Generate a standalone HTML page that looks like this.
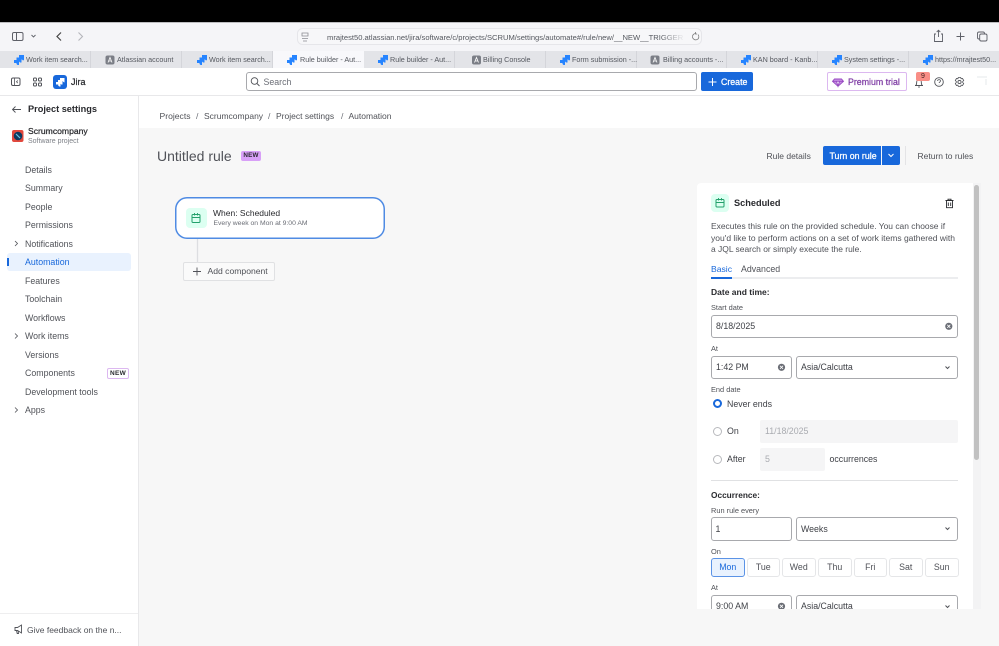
<!DOCTYPE html>
<html><head><meta charset="utf-8"><title>Rule builder</title>
<style>
*{box-sizing:border-box}
html,body{margin:0;padding:0;width:999px;height:646px;overflow:hidden;background:#f7f7f7;font-family:"Liberation Sans",sans-serif;color:#505258}
#w{position:absolute;left:0;top:0;width:999px;height:646px;overflow:hidden;filter:blur(.3px)}
.a{position:absolute}
.t{position:absolute;white-space:nowrap;line-height:1}
svg{position:absolute;overflow:visible}
.tab{position:absolute;top:51px;height:17px;background:#e3e4e8;border-right:1px solid #d4d5da}
.tab span{position:absolute;top:5px;font-size:7.2px;color:#55585f;white-space:nowrap;line-height:1}
.nav{position:absolute;left:25px;font-size:8.8px;color:#505258;white-space:nowrap;line-height:1}
.inp{position:absolute;background:#fff;border:1px solid #a8a9ad;border-radius:3px}
.lab{position:absolute;left:711px;font-size:7.4px;color:#505258;white-space:nowrap;line-height:1}
.val{position:absolute;font-size:8.8px;color:#3f4147;white-space:nowrap;line-height:1}
.day{position:absolute;top:558px;height:19px;width:33.5px;background:#fff;border:1px solid #e5e6e8;border-radius:3px;font-size:8.8px;color:#505258;text-align:center;line-height:17px}
.sb{-webkit-text-stroke:.25px currentColor}
</style></head><body><div id="w">

<!-- browser chrome -->
<div class="a" style="left:0;top:0;width:999px;height:22px;background:#000"></div>
<div class="a" style="left:0;top:22px;width:999px;height:29px;background:#f5f5f8;border-top:1px solid #bdbdc0"></div>
<svg style="left:0;top:0" width="999" height="51" fill="none" stroke="#5e6068" stroke-width="1">
<rect x="12.500" y="32.500" width="10.500" height="8" rx="1.500"/><path d="M16.500 32.500v8"/>
<path d="M31.500 35l2 2 2-2" stroke-width=".9"/>
<path d="M61 32.500l-4 4 4 4" stroke-width="1.200" stroke="#444"/>
<path d="M78.500 32.500l4 4-4 4" stroke-width="1.100" stroke="#b5b6bb"/>
<rect x="297.500" y="28.500" width="404" height="16" rx="5" fill="#f7f7f9" stroke="#e6e6ea"/>
<path d="M302 33h6v3h-6zM302 38.500h6M303 41h4" stroke="#8a8c92" stroke-width=".8"/>
<path d="M698 34.500a3.200 3.200 0 1 1-2.600-1M695.500 32v2h1.600" stroke="#777" stroke-width=".8"/>
<path d="M936 34h-1.500v7.500h8V34H941M938.500 37v-6.500M936.700 32l1.800-1.800 1.800 1.800" stroke-width=".9"/>
<path d="M960.500 32.500v8M956.500 36.500h8" stroke-width="1"/>
<rect x="977.500" y="32" width="7" height="7" rx="1.500" stroke-width=".9"/><rect x="979.700" y="34" width="7.300" height="7" rx="1.500" fill="#f5f5f8" stroke-width=".9"/>
</svg>
<div class="t" style="left:327px;top:31.500px;font-size:7.600px;line-height:11px;height:11px;color:#55585f;width:358px;overflow:hidden;-webkit-mask-image:linear-gradient(90deg,#000 93%,transparent)">mrajtest50.atlassian.net/jira/software/c/projects/SCRUM/settings/automate#/rule/new/__NEW__TRIGGER</div>

<!-- tabs -->
<div class="tab" style="left:0;width:91px"><span style="left:26px">Work item search...</span></div>
<div class="tab" style="left:91px;width:91px"><span style="left:26px">Atlassian account</span></div>
<div class="tab" style="left:182px;width:91px"><span style="left:27px">Work item search...</span></div>
<div class="tab" style="left:273px;width:91px;background:#f8f8fb;border:0"><span style="left:27px">Rule builder - Aut...</span></div>
<div class="tab" style="left:364px;width:91px"><span style="left:26px">Rule builder - Aut...</span></div>
<div class="tab" style="left:455px;width:91px"><span style="left:28px">Billing Console</span></div>
<div class="tab" style="left:546px;width:91px"><span style="left:26px">Form submission -...</span></div>
<div class="tab" style="left:637px;width:90px"><span style="left:26px">Billing accounts -...</span></div>
<div class="tab" style="left:727px;width:91px"><span style="left:26px">KAN board - Kanb...</span></div>
<div class="tab" style="left:818px;width:91px"><span style="left:26px">System settings -...</span></div>
<div class="tab" style="left:909px;width:90px;border:0"><span style="left:26px">https://mrajtest50...</span></div>
<svg style="left:0;top:0" width="999" height="70">
<defs><g id="jm" fill="#2684ff"><path d="M5 0h5v5L9 5.500 8 4.500H5z"/><path d="M2.500 2.500h5v5h-1.500L5 6.500V5.500H2.500z"/><path d="M0 5h5v5H3.500L2.500 9V8H0z"/></g>
<g id="am"><rect width="9" height="9" rx="2" fill="#7b7e86"/><path d="M2.500 7L4.500 2l2 5M3.300 5.500h2.400" stroke="#fff" stroke-width=".8" fill="none"/></g></defs>
<use href="#jm" x="14" y="55"/><use href="#am" x="105.500" y="55.500"/><use href="#jm" x="197" y="55"/><use href="#jm" x="287" y="55"/><use href="#jm" x="378" y="55"/><use href="#am" x="472" y="55.500"/><use href="#jm" x="560" y="55"/><use href="#am" x="650.500" y="55.500"/><use href="#jm" x="741" y="55"/><use href="#jm" x="832" y="55"/><use href="#jm" x="923" y="55"/>
</svg>

<!-- jira nav -->
<div class="a" style="left:0;top:68px;width:999px;height:28px;background:#fff;border-bottom:1px solid #e8e8ea"></div>
<div class="a" style="left:246px;top:72px;width:451px;height:19px;background:#fff;border:1px solid #a8a9ad;border-radius:3px"></div>
<svg style="left:0;top:0" width="999" height="100" fill="none" stroke="#505258">
<rect x="11.500" y="78" width="8.500" height="7.500" rx="1.500"/><path d="M14.500 78v7.500M17.800 80.500l-1.300 1.300 1.300 1.300" stroke-width=".8"/>
<rect x="33.500" y="78" width="3" height="3" rx="1"/><rect x="38.500" y="78" width="3" height="3" rx="1"/><rect x="33.500" y="83" width="3" height="3" rx="1"/><rect x="38.500" y="83" width="3" height="3" rx="1"/>
<rect x="53" y="75" width="14" height="14" rx="3" fill="#1868db" stroke="none"/>
<g fill="#fff" stroke="none"><path d="M60 78h4.500v4.500L63.500 82l-1-1H60z"/><path d="M58 80h4.500v4.500h-1.300l-1-1V82.500H58z"/><path d="M56 82h4.500v4.500h-1.300l-1-1v-1H56z"/></g>
<circle cx="254.500" cy="81" r="3.300" stroke-width=".9"/><path d="M257 83.500l2.500 2.500" stroke-width=".9"/>
</svg>
<div class="t sb" style="left:71px;top:77.500px;font-size:9px;color:#292a2e">Jira</div>
<div class="t" style="left:263.500px;top:77.500px;font-size:8.800px;color:#6b6e76">Search</div>
<div class="a" style="left:701px;top:72px;width:52px;height:19px;background:#1868db;border-radius:2px"></div>
<svg style="left:0;top:0" width="999" height="100" fill="none">
<path d="M712.500 78v8M708.500 82h8" stroke="#fff" stroke-width="1"/>
</svg>
<div class="t sb" style="left:721px;top:77.500px;font-size:8.800px;color:#fff">Create</div>
<div class="a" style="left:827px;top:72px;width:80px;height:19px;background:#fff;border:1px solid #dcb8f0;border-radius:2px"></div>
<svg style="left:0;top:0" width="999" height="100" fill="none">
<path d="M834.500 79h7l2 2.300-5.500 5-5.500-5zM832.500 81.300h11M836.500 81.300l1.500 5 1.500-5" stroke="#964ac0" stroke-width=".9" fill="#c98fe4"/>
<path d="M915 85.500h8M915.800 85.500c.9-1 .9-2 .9-3.500a2.300 2.300 0 0 1 4.600 0c0 1.500 0 2.500.9 3.500M918.200 87h1.600" stroke="#505258" stroke-width=".9"/>
<circle cx="939" cy="82" r="4.300" stroke="#505258" stroke-width=".9"/><path d="M937.600 81c0-1.800 2.900-1.800 2.900 0 0 1-1.400 1-1.400 2M939 84.500v.3" stroke="#505258" stroke-width=".8"/>
<circle cx="959.500" cy="82" r="1.600" stroke="#505258" stroke-width=".9"/><path d="M958.300 77.500h2.400l.4 1.300 1.400-.3 1.200 2-1 1 0 1 1 1-1.200 2-1.400-.4-.4 1.300h-2.400l-.4-1.300-1.400.4-1.200-2 1-1 0-1-1-1 1.200-2 1.400.3z" stroke="#505258" stroke-width=".8"/>
<path d="M977 77h10M986 79v6" stroke="#eef0f2" stroke-width="1.500"/>
</svg>
<div class="t sb" style="left:848px;top:77.500px;font-size:8.800px;color:#803fa5">Premium trial</div>
<div class="a" style="left:916px;top:72px;width:14px;height:9px;background:#f98e86;border-radius:2px;font-size:7px;color:#42221f;text-align:center;line-height:9px">9</div>

<!-- sidebar -->
<div class="a" style="left:0;top:96px;width:139px;height:550px;background:#fff;border-right:1px solid #e8e8ea"></div>
<svg style="left:0;top:0" width="140" height="646" fill="none" stroke="#505258">
<path d="M21 109.500h-8.500M15.500 106.500l-3 3 3 3" stroke-width=".9"/>
<rect x="12" y="130" width="11.500" height="12" rx="2" fill="#e2483d" stroke="none"/>
<circle cx="18" cy="136" r="4.300" fill="#0c3a61" stroke="none"/><path d="M16 134l4 4" stroke="#6cc3e0" stroke-width="1.200"/>
<path d="M15 241l2.500 2.500-2.500 2.500M15 333.500l2.500 2.500-2.500 2.500M15 407.500l2.500 2.500-2.500 2.500" stroke-width=".8"/>
</svg>
<div class="t" style="left:28px;top:104.500px;font-size:9.200px;font-weight:bold;color:#292a2e">Project settings</div>
<div class="t sb" style="left:28px;top:127px;font-size:8.600px;color:#292a2e">Scrumcompany</div>
<div class="t" style="left:28px;top:138px;font-size:7px;color:#7d8087">Software project</div>
<div class="a" style="left:7px;top:253px;width:124px;height:18px;background:#e9f2fe;border-radius:3px"></div>
<div class="a" style="left:7px;top:258px;width:1.500px;height:8px;background:#1868db"></div>
<div class="nav" style="top:165.500px">Details</div>
<div class="nav" style="top:184px">Summary</div>
<div class="nav" style="top:202.500px">People</div>
<div class="nav" style="top:221px">Permissions</div>
<div class="nav" style="top:239.500px">Notifications</div>
<div class="nav" style="top:258px;color:#1868db">Automation</div>
<div class="nav" style="top:276.500px">Features</div>
<div class="nav" style="top:295px">Toolchain</div>
<div class="nav" style="top:313.500px">Workflows</div>
<div class="nav" style="top:332px">Work items</div>
<div class="nav" style="top:350.500px">Versions</div>
<div class="nav" style="top:369px">Components</div>
<div class="nav" style="top:387.500px">Development tools</div>
<div class="nav" style="top:406px">Apps</div>
<div class="a" style="left:107px;top:368px;width:22px;height:11px;background:#fff;border:1px solid #dcb8f0;border-radius:2px;font-size:6.500px;font-weight:bold;color:#292a2e;text-align:center;line-height:9px;letter-spacing:.3px">NEW</div>
<div class="a" style="left:0;top:613px;width:138px;height:1px;background:#eeeeef"></div>
<svg style="left:0;top:0" width="30" height="646" fill="none" stroke="#505258"><path d="M15 627.500h2.500l4-2.500v8l-4-2.500H15zM16.500 630.500l.7 3h1.300l-.5-3" stroke-width=".9"/></svg>
<div class="t" style="left:27px;top:625.500px;font-size:8.500px;color:#505258">Give feedback on the n...</div>

<!-- content -->
<div class="a" style="left:139px;top:96px;width:860px;height:32px;background:#fff"></div>
<div class="t" style="left:159.500px;top:112px;font-size:8.600px;color:#505258">Projects</div>
<div class="t" style="left:196px;top:112px;font-size:8.600px;color:#6b6e76">/</div>
<div class="t" style="left:204px;top:112px;font-size:8.500px;color:#505258">Scrumcompany</div>
<div class="t" style="left:268px;top:112px;font-size:8.600px;color:#6b6e76">/</div>
<div class="t" style="left:276px;top:112px;font-size:8.500px;color:#505258">Project settings</div>
<div class="t" style="left:341px;top:112px;font-size:8.600px;color:#6b6e76">/</div>
<div class="t" style="left:348.500px;top:112px;font-size:8.500px;color:#505258">Automation</div>

<div class="t" style="left:157px;top:149px;font-size:14px;color:#505258">Untitled rule</div>
<div class="a" style="left:241px;top:151px;width:20px;height:10px;background:#d8a0f7;border-radius:2px;font-size:6.300px;font-weight:bold;color:#292a2e;text-align:center;line-height:10px;letter-spacing:.2px">NEW</div>

<div class="t" style="left:766.500px;top:151.500px;font-size:8.500px;color:#505258">Rule details</div>
<div class="a" style="left:823px;top:146px;width:58px;height:19px;background:#1868db;border-radius:2px 0 0 2px"></div>
<div class="a" style="left:882px;top:146px;width:18px;height:19px;background:#1868db;border-radius:0 2px 2px 0"></div>
<div class="t sb" style="left:829.500px;top:151.500px;font-size:8.800px;color:#fff">Turn on rule</div>
<svg style="left:0;top:0" width="999" height="170" fill="none"><path d="M888.500 154l2.500 2.500 2.500-2.500" stroke="#fff" stroke-width="1"/></svg>
<div class="a" style="left:904.500px;top:146px;width:1.500px;height:19px;background:#e4e4e6"></div>
<div class="t" style="left:917.500px;top:151.500px;font-size:8.500px;color:#505258">Return to rules</div>

<!-- canvas card -->
<div class="a" style="left:175px;top:197px;width:209.500px;height:42px;background:#fff;box-shadow:inset 0 0 0 1.500px #4f8be3;border-radius:12px"></div>
<div class="a" style="left:185.500px;top:208px;width:21px;height:20px;background:#dcfff1;border-radius:4px"></div>
<svg style="left:0;top:0" width="400" height="300" fill="none">
<rect x="192" y="214.500" width="8" height="8" rx="1" stroke="#22a06b"/><path d="M192 217.500h8M194.500 213v2.500M197.500 213v2.500" stroke="#22a06b" stroke-width=".9"/>
<path d="M197.500 239v23" stroke="#dddee1" stroke-width="1.300"/>
</svg>
<div class="t" style="left:213px;top:209px;font-size:8.500px;color:#292a2e">When: Scheduled</div>
<div class="t" style="left:213.500px;top:221px;font-size:6.800px;color:#6b6e76">Every week on Mon at 9:00 AM</div>
<div class="a" style="left:183px;top:262px;width:92px;height:18.500px;background:#fafafa;border:1px solid #e0e1e3;border-radius:2px"></div>
<div class="t" style="left:207.500px;top:267px;font-size:8.600px;color:#505258">Add component</div>
<svg style="left:0;top:0" width="400" height="300" fill="none"><path d="M197 267.500v8M193 271.500h8" stroke="#505258" stroke-width=".9"/></svg>

<!-- panel -->
<div class="a" style="left:697px;top:183px;width:283px;height:426px;background:#fff;border-radius:4px 4px 0 0;overflow:hidden"></div>
<div class="a" style="left:972.500px;top:183px;width:8px;height:426px;background:#f3f3f4"></div>
<div class="a" style="left:974px;top:185px;width:5px;height:275px;background:#c1c1c1;border-radius:3px"></div>
<div class="a" style="left:711px;top:194px;width:18px;height:18px;background:#dcfff1;border-radius:4px"></div>
<svg style="left:0;top:0" width="999" height="300" fill="none">
<rect x="716" y="199.500" width="8" height="7.500" rx="1" stroke="#22a06b"/><path d="M716 202.500h8M718.500 198v2.500M721.500 198v2.500" stroke="#22a06b" stroke-width=".9"/>
<path d="M945.500 200.500h8M948 200.500v-1.300h3v1.300M946.500 200.500v7.200h6v-7.200M948.300 202.500v3.500M950.700 202.500v3.500" stroke="#292a2e" stroke-width=".9"/>
</svg>
<div class="t" style="left:734px;top:198.500px;font-size:9.200px;font-weight:bold;color:#292a2e">Scheduled</div>
<div class="t" style="left:711px;top:222px;font-size:8.450px;color:#505258">Executes this rule on the provided schedule. You can choose if</div>
<div class="t" style="left:711px;top:233.500px;font-size:8.500px;color:#505258">you'd like to perform actions on a set of work items gathered with</div>
<div class="t" style="left:711px;top:245px;font-size:8.450px;color:#505258">a JQL search or simply execute the rule.</div>
<div class="t" style="left:711px;top:265px;font-size:8.600px;color:#1868db">Basic</div>
<div class="t" style="left:741px;top:265px;font-size:8.800px;color:#505258">Advanced</div>
<div class="a" style="left:711px;top:277px;width:247px;height:1.500px;background:#ecedef"></div>
<div class="a" style="left:711px;top:277px;width:20.500px;height:1.500px;background:#1868db"></div>
<div class="t" style="left:711px;top:288px;font-size:8.500px;font-weight:bold;color:#292a2e">Date and time:</div>

<div class="lab" style="top:304px">Start date</div>
<div class="inp" style="left:711px;top:315px;width:247px;height:23px"></div>
<div class="val" style="left:716px;top:322px">8/18/2025</div>

<div class="lab" style="top:345px">At</div>
<div class="inp" style="left:711px;top:356px;width:81px;height:23px"></div>
<div class="val" style="left:716px;top:363px">1:42 PM</div>
<div class="inp" style="left:796px;top:356px;width:162px;height:23px"></div>
<div class="val" style="left:801px;top:363px">Asia/Calcutta</div>

<div class="lab" style="top:386px">End date</div>
<div class="a" style="left:713px;top:399px;width:9px;height:9px;border-radius:50%;border:2.500px solid #1868db;background:#fff"></div>
<div class="val" style="left:727px;top:399.500px">Never ends</div>
<div class="a" style="left:713px;top:427px;width:9px;height:9px;border-radius:50%;border:1px solid #b8b9bd;background:#fff"></div>
<div class="val" style="left:727px;top:427px">On</div>
<div class="a" style="left:760px;top:420px;width:198px;height:23px;background:#f5f5f6;border-radius:2px"></div>
<div class="val" style="left:765px;top:427px;color:#a9abb0">11/18/2025</div>
<div class="a" style="left:713px;top:455px;width:9px;height:9px;border-radius:50%;border:1px solid #b8b9bd;background:#fff"></div>
<div class="val" style="left:727px;top:455px">After</div>
<div class="a" style="left:760px;top:448px;width:65px;height:23px;background:#f5f5f6;border-radius:2px"></div>
<div class="val" style="left:765px;top:455px;color:#a9abb0">5</div>
<div class="val" style="left:829.500px;top:455px">occurrences</div>
<div class="a" style="left:711px;top:480px;width:247px;height:1px;background:#e0e1e3"></div>

<div class="t" style="left:711px;top:491px;font-size:8.300px;font-weight:bold;color:#292a2e">Occurrence:</div>
<div class="lab" style="top:507px">Run rule every</div>
<div class="inp" style="left:711px;top:517px;width:81px;height:24px"></div>
<div class="val" style="left:715.500px;top:525px">1</div>
<div class="inp" style="left:796px;top:517px;width:162px;height:24px"></div>
<div class="val" style="left:801px;top:525px">Weeks</div>
<div class="lab" style="top:548px">On</div>
<div class="day" style="left:711px;background:#e9f2fe;border-color:#5b93e6;color:#1868db">Mon</div>
<div class="day" style="left:746.500px">Tue</div>
<div class="day" style="left:782px">Wed</div>
<div class="day" style="left:818px">Thu</div>
<div class="day" style="left:853.500px">Fri</div>
<div class="day" style="left:889px">Sat</div>
<div class="day" style="left:925px">Sun</div>
<div class="lab" style="top:584px">At</div>
<div class="inp" style="left:711px;top:595px;width:81px;height:23px"></div>
<div class="val" style="left:716px;top:602px">9:00 AM</div>
<div class="inp" style="left:796px;top:595px;width:162px;height:23px"></div>
<div class="val" style="left:801px;top:602px">Asia/Calcutta</div>
<svg style="left:0;top:0" width="999" height="646" fill="none" stroke="#505258" stroke-width="1">
<path d="M945.500 366.500l2 2 2-2M945.500 527.500l2 2 2-2M945.500 605.500l2 2 2-2"/>
<circle cx="948.800" cy="326.300" r="3.600" fill="#6b6e76" stroke="none"/><path d="M947.300 324.800l3 3m0-3l-3 3" stroke="#fff" stroke-width=".8"/>
<circle cx="781.500" cy="367.300" r="3.600" fill="#6b6e76" stroke="none"/><path d="M780 365.800l3 3m0-3l-3 3" stroke="#fff" stroke-width=".8"/>
<circle cx="781.500" cy="606.300" r="3.600" fill="#6b6e76" stroke="none"/><path d="M780 604.800l3 3m0-3l-3 3" stroke="#fff" stroke-width=".8"/>
</svg>
<div class="a" style="left:697px;top:609px;width:302px;height:37px;background:#f7f7f7"></div>
</div></body></html>
